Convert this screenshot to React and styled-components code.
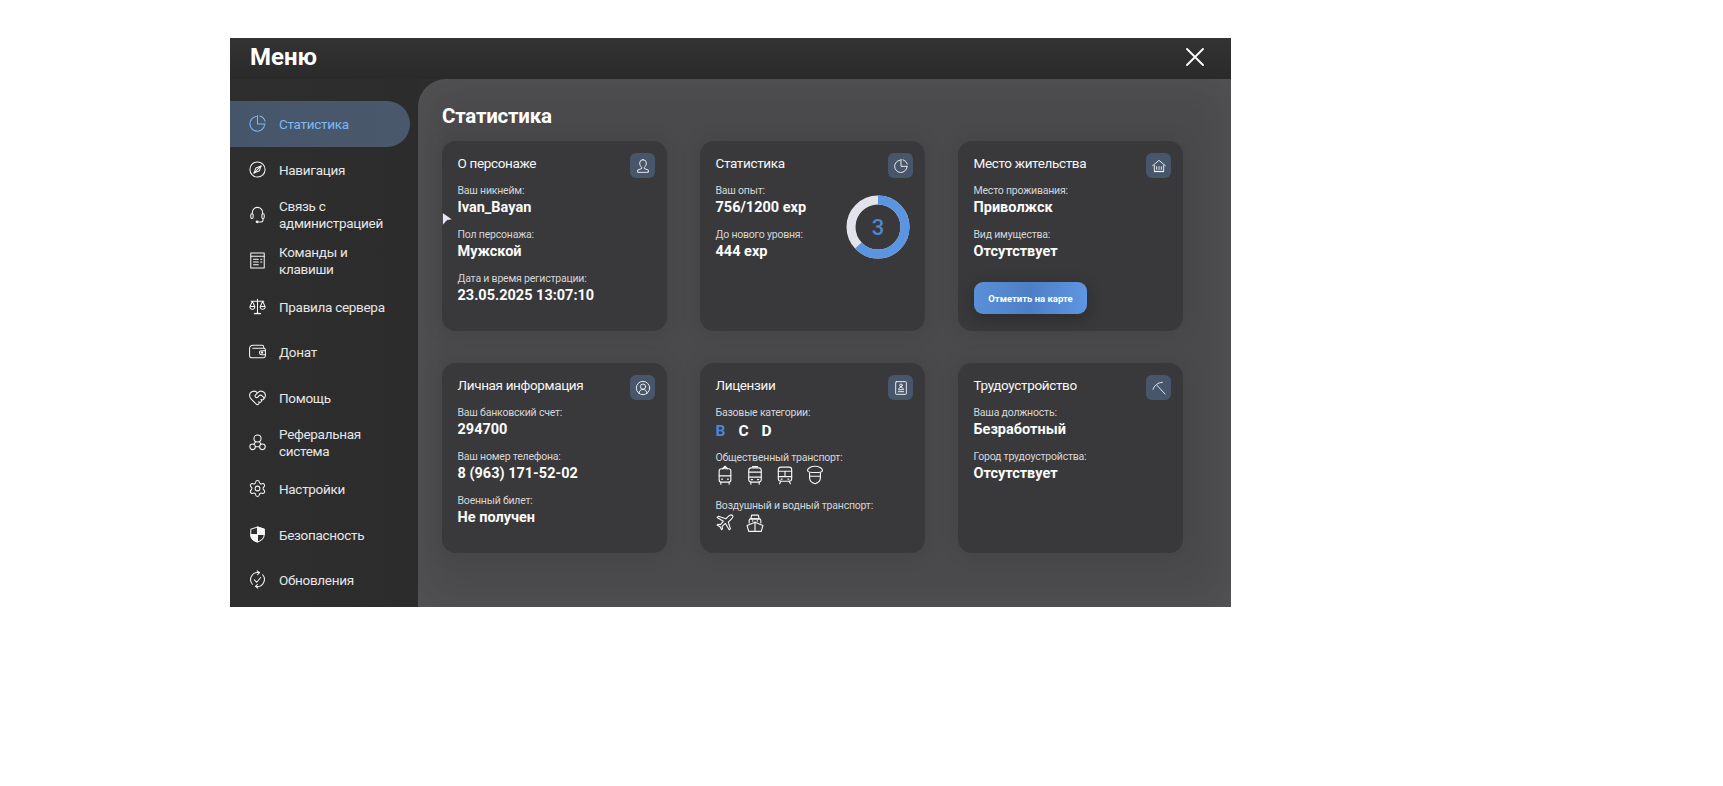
import React from 'react';
import styled, { createGlobalStyle } from 'styled-components';
import { HeartHandshake, Settings, CircleUserRound } from 'lucide-react';

const Global = createGlobalStyle`
  body {
    margin: 0;
    background: #fff;
    font-family: Roboto, "Noto Sans", sans-serif;
  }
`;

const Ico = ({ size = 18, children, strokeWidth = 1.35 }) => (
  <svg width={size} height={size} viewBox="0 0 24 24" fill="none" stroke="currentColor" strokeWidth={strokeWidth} strokeLinecap="round" strokeLinejoin="round">
    {children}
  </svg>
);

const PieClock = (p) => (
  <Ico {...p}>
    <path d="M10.500 3.200A9.300 9.300 0 1 0 21 13.500" />
    <path d="M12 2v10.500h9.600" />
    <path d="M15 2.600a9.600 9.600 0 0 1 6.500 6.500" />
  </Ico>
);
const CompassIcon = (p) => (
  <Ico {...p}>
    <circle cx="12" cy="12" r="9.600" />
    <path d="M16.500 7.500l-2 6-7 3 2.500-6.500z" />
    <path d="M16.500 7.500L7.500 16.500" />
  </Ico>
);
const Headset = (p) => (
  <Ico {...p}>
    <path d="M5.500 11V9.500a6.500 6.500 0 0 1 13 0V11" />
    <rect x="3.500" y="11" width="3" height="6" rx="1.500" />
    <rect x="17.500" y="11" width="3" height="6" rx="1.500" />
    <path d="M19 17v1.500a3 3 0 0 1-3 3h-3" />
    <circle cx="11.500" cy="21.300" r="1.200" fill="currentColor" />
  </Ico>
);
const Commands = (p) => (
  <Ico {...p}>
    <rect x="3.500" y="2.500" width="17" height="19" />
    <path d="M3.500 6.500h17M7 10.500h6M7 14h6M7 17.500h6M16 10.500h1.500M16 14h1.500" />
  </Ico>
);
const ScaleIcon = (p) => (
  <Ico {...p}>
    <path d="M12 3v17M8 21h8M10 20.500h4M4 5.500h16" />
    <path d="M5.500 5.500L2.500 12v1.500a3 3 0 0 0 3 2 3 3 0 0 0 3-2V12zM2.500 12h6" />
    <path d="M18.500 5.500L15.500 12v1.500a3 3 0 0 0 3 2 3 3 0 0 0 3-2V12zM15.500 12h6" />
  </Ico>
);
const WalletIcon = (p) => (
  <Ico {...p}>
    <path d="M20 8V6.500A2.500 2.500 0 0 0 17.500 4H6A4 4 0 0 0 2 8v9a3 3 0 0 0 3 3h14.500a2.500 2.500 0 0 0 2.500-2.500V10a2 2 0 0 0-2-2H6" />
    <path d="M22 11h-5a1.500 1.500 0 0 0 0 5h5" />
    <rect x="17" y="12.500" width="1.500" height="1.500" fill="currentColor" />
  </Ico>
);
const Referral = (p) => (
  <Ico {...p}>
    <circle cx="12" cy="7" r="4.500" />
    <circle cx="5.800" cy="17.500" r="3.500" />
    <circle cx="18.200" cy="17.500" r="3.500" />
    <path d="M9.500 11l-2 3.500M14.500 11l2 3.500M9.300 17.500h5.400" />
  </Ico>
);
const ShieldHalf = (p) => (
  <Ico {...p}>
    <path d="M12 2.500l8.500 3V12c0 5-4 8-8.500 9.500C7.500 20 3.500 17 3.500 12V5.500z" />
    <path d="M12 2.500l8.500 3V12H12zM12 12v9.500C7.500 20 3.500 17 3.500 12z" fill="currentColor" />
  </Ico>
);
const UpdateIcon = (p) => (
  <Ico {...p}>
    <path d="M5.500 18A9 9 0 0 1 14 3.300" />
    <path d="M18.500 6A9 9 0 0 1 10 20.700" />
    <path d="M11.500 1l3 2.400-2.500 2.600M12.500 23l-3-2.400 2.500-2.600" />
    <path d="M8 12.500l3 3 5-6" />
  </Ico>
);
const Bust = (p) => (
  <Ico {...p}>
    <path d="M12 2.500A5 5 0 0 0 7 7.500c0 3 1.500 5 3 6.500v2L4 18v3.500h16V18l-6-2v-2c1.500-1.500 3-3.500 3-6.500a5 5 0 0 0-5-5z" />
  </Ico>
);
const HouseIcon = (p) => (
  <Ico {...p}>
    <path d="M2.500 11.500L12 3.500l9.500 8" />
    <path d="M5 11v9h14v-9" />
    <path d="M8.500 13v4M12 13v4M15.500 13v4M5 20.500h14" />
  </Ico>
);
const LicenseIcon = (p) => (
  <Ico {...p}>
    <rect x="4" y="2.500" width="16" height="19" rx="1" />
    <circle cx="12" cy="8" r="2" />
    <path d="M8.500 14c0-2 1.500-3 3.500-3s3.500 1 3.500 3zM8 17.500h8" />
  </Ico>
);
const PickIcon = (p) => (
  <Ico {...p}>
    <path d="M3 14C5 8 10 4 17 3.500" />
    <path d="M9 8l12 13" />
  </Ico>
);
const Trolley = (p) => (
  <Ico {...p}>
    <path d="M9 4.500L12 1.500l3 3" />
    <rect x="5" y="4.500" width="14" height="16" rx="2.500" />
    <path d="M5 13h14M7 20.500v2.500M17 20.500v2.500M8 17h1M15 17h1" />
  </Ico>
);
const BusIcon = (p) => (
  <Ico {...p}>
    <path d="M9 2h6" />
    <rect x="4.500" y="3.500" width="15" height="17" rx="3" />
    <path d="M4.500 8.500h15M4.500 14.500h15M7 20.500v2.500M17 20.500v2.500M7.500 17.500h1.500M15 17.500h1.500" />
  </Ico>
);
const TrainIcon = (p) => (
  <Ico {...p}>
    <rect x="4" y="2.500" width="16" height="17" rx="3" />
    <path d="M4 7.500h16M4 14h16M12 7.500V14M7.500 17h1M15.500 17h1M7 19.500L5.500 22.500M17 19.500l1.500 3" />
  </Ico>
);
const Officer = (p) => (
  <Ico {...p}>
    <path d="M3 6.500C3 3.500 7.500 1.500 12 1.500s9 2 9 5c0 1.500-4.500 2.500-9 2.500S3 8 3 6.500z" />
    <path d="M5.500 9v6.500c0 3.500 3.500 6 6.500 7 3-1 6.500-3.500 6.500-7V9" />
    <path d="M5.500 13.500h13" />
  </Ico>
);
const PlaneIcon = (p) => (
  <Ico {...p}>
    <path d="M21 3c-1.500-1.500-3.500-.500-5 1l-3 3L4 4 2.500 5.500 10 10l-3.500 4-3-.500-1 1 3.500 2 2 3.500 1-1-.500-3 4-3.500 4.500 7.500L18.500 19 16 11l3-3c1.500-1.500 3.500-3.500 2-5z" />
  </Ico>
);
const ShipIcon = (p) => (
  <Ico {...p}>
    <path d="M8 2.500h8l1 4.500H7z" />
    <path d="M5 12V9a2 2 0 0 1 2-2h10a2 2 0 0 1 2 2v3" />
    <path d="M2.500 15L12 11l9.500 4-2 7h-15z" />
    <path d="M12 11v11M9 9.500h.500M14.500 9.500h.500" />
  </Ico>
);

const Window = styled.div`
  position: relative;
  width: 1001px;
  height: 569px;
  margin: 38px 0 0 230px;
  background: #2d2d2e;
  overflow: hidden;
  color: #fff;
`;

const Header = styled.header`
  height: 41px;
  display: flex;
  align-items: flex-start;
  justify-content: space-between;
  padding: 0 27px 0 20px;
  background: linear-gradient(180deg, #333334 0%, #2a2a2b 100%);
`;

const Logo = styled.h1`
  margin: 2px 0 0;
  font-size: 24px;
  line-height: 34px;
  font-weight: 700;
`;

const CloseButton = styled.button`
  margin-top: 10px;
  width: 18px;
  height: 18px;
  padding: 0;
  border: 0;
  background: none;
  color: #fff;
  display: block;
`;

const Body = styled.div`
  display: flex;
  height: 528px;
`;

const Sidebar = styled.nav`
  width: 188px;
  flex: none;
  padding-top: 22px;
  background: linear-gradient(90deg, #2e2e2f, #2c2c2d);
`;

const NavItem = styled.a`
  width: 180px;
  height: 45.600px;
  display: flex;
  align-items: center;
  gap: 12px;
  padding-left: 18px;
  box-sizing: border-box;
  border-radius: 0 23px 23px 0;
  font-size: 13.500px;
  line-height: 17px;
  letter-spacing: -0.3px;
  color: ${(p) => (p.$active ? '#7db9f2' : '#e6e6e6')};
  background: ${(p) => (p.$active ? 'linear-gradient(90deg, #46566a, #4a586b)' : 'none')};
`;

const NavIcon = styled.span`
  width: 19px;
  height: 19px;
  flex: none;
  display: flex;
  color: ${(p) => (p.$active ? '#7db9f2' : '#f6f6f6')};
`;

const NavText = styled.span`
  position: relative;
  top: ${(p) => (p.$wrapped ? '0' : '1px')};
  max-width: 108px;
  white-space: ${(p) => (p.$wrapped ? 'normal' : 'nowrap')};
`;

const Content = styled.main`
  flex: 1;
  padding: 24px 0 0 24px;
  border-radius: 28px 0 0 0;
  background: #4a4a4c;
  box-shadow: inset 0 0 45px rgba(255, 255, 255, 0.06);
`;

const Heading = styled.h2`
  margin: 0 0 12px;
  font-size: 20.500px;
  line-height: 26px;
  font-weight: 700;
  letter-spacing: -0.2px;
`;

const Grid = styled.div`
  display: grid;
  grid-template-columns: repeat(3, 225px);
  grid-auto-rows: 190px;
  gap: 32px 33px;
`;

const CardBox = styled.section`
  display: flex;
  flex-direction: column;
  box-sizing: border-box;
  padding: 12px 12px 17px 15.500px;
  border-radius: 14px;
  background: #39393b;
  box-shadow: 0 0 22px rgba(0, 0, 0, 0.1);
`;

const CardHead = styled.div`
  display: flex;
  justify-content: space-between;
  align-items: flex-start;
  height: 25px;
  margin-bottom: 6px;
`;

const CardTitle = styled.h3`
  margin: 0;
  font-size: 13.500px;
  line-height: 20px;
  font-weight: 400;
  letter-spacing: -0.35px;
  color: #f6f6f6;
`;

const IconBox = styled.span`
  width: 25px;
  height: 25px;
  border-radius: 6px;
  background: #47566a;
  display: flex;
  align-items: center;
  justify-content: center;
  color: #fff;
`;

const Fields = styled.div`
  display: flex;
  flex-direction: column;
  gap: 10px;
`;

const Label = styled.div`
  font-size: 10.500px;
  line-height: 14px;
  letter-spacing: -0.2px;
  color: #d6d6d8;
`;

const Value = styled.div`
  font-size: 14.500px;
  line-height: 20px;
  font-weight: 700;
  color: #fbfbfb;
  white-space: nowrap;
`;

const Row = styled.div`
  display: flex;
  justify-content: space-between;
`;

const Donut = styled.div`
  position: relative;
  width: 64px;
  height: 64px;
  margin: 11px 3px 0 0;
`;

const DonutValue = styled.span`
  position: absolute;
  inset: 0;
  display: flex;
  align-items: center;
  justify-content: center;
  font-size: 22px;
  font-weight: 500;
  color: #4b87d9;
`;

const MapButton = styled.button`
  margin: auto 0 0 0.500px;
  width: 113px;
  height: 32px;
  border: 0;
  border-radius: 9px;
  padding: 0;
  font-family: inherit;
  font-size: 9.500px;
  font-weight: 700;
  color: #fff;
  background: linear-gradient(90deg, #5a90d8, #4d7fc6 50%, #5e96e2);
  box-shadow: 0 4px 16px rgba(0, 0, 0, 0.25);
`;

const Categories = styled.div`
  display: flex;
  gap: 13px;
  margin-top: 1px;
`;

const Category = styled.span`
  font-size: 15.500px;
  line-height: 20px;
  font-weight: 700;
  color: ${(p) => (p.$on ? '#4d87da' : '#fff')};
`;

const LicenseFields = styled(Fields)`
  gap: 10px;
`;

const IconRow = styled.div`
  display: flex;
  gap: 10px;
  margin: 0 0 4px -1px;
  color: #f8f8f8;
`;

const Cursor = styled.svg`
  position: absolute;
  left: 212px;
  top: 174px;
`;

const NAV = [
  [PieClock, 'Статистика', true],
  [CompassIcon, 'Навигация'],
  [Headset, 'Связь с администрацией', false, true],
  [Commands, 'Команды и клавиши', false, true],
  [ScaleIcon, 'Правила сервера'],
  [WalletIcon, 'Донат'],
  [HeartHandshake, 'Помощь'],
  [Referral, 'Реферальная система', false, true],
  [Settings, 'Настройки'],
  [ShieldHalf, 'Безопасность'],
  [UpdateIcon, 'Обновления'],
];

const Field = ({ label, value }) => (
  <div>
    <Label>{label}</Label>
    <Value>{value}</Value>
  </div>
);

const Card = ({ title, icon: Icon, children }) => (
  <CardBox>
    <CardHead>
      <CardTitle>{title}</CardTitle>
      <IconBox><Icon size={16} strokeWidth={1.3} /></IconBox>
    </CardHead>
    {children}
  </CardBox>
);

const App = () => (
  <Window>
    <Global />
    <Header>
      <Logo>Меню</Logo>
      <CloseButton aria-label="Закрыть">
        <svg width="18" height="18" viewBox="0 0 18 18" stroke="currentColor" strokeWidth="1.8" strokeLinecap="round">
          <path d="M1 1l16 16M17 1L1 17" />
        </svg>
      </CloseButton>
    </Header>
    <Body>
      <Sidebar>
        {NAV.map(([Icon, text, active, wrapped]) => (
          <NavItem key={text} $active={active}>
            <NavIcon $active={active}><Icon size={19} strokeWidth={1.3} /></NavIcon>
            <NavText $wrapped={wrapped}>{text}</NavText>
          </NavItem>
        ))}
      </Sidebar>
      <Content>
        <Heading>Статистика</Heading>
        <Grid>
          <Card title="О персонаже" icon={Bust}>
            <Fields>
              <Field label="Ваш никнейм:" value="Ivan_Bayan" />
              <Field label="Пол персонажа:" value="Мужской" />
              <Field label="Дата и время регистрации:" value="23.05.2025 13:07:10" />
            </Fields>
          </Card>
          <Card title="Статистика" icon={PieClock}>
            <Row>
              <Fields>
                <Field label="Ваш опыт:" value="756/1200 exp" />
                <Field label="До нового уровня:" value="444 exp" />
              </Fields>
              <Donut>
                <svg width="64" height="64" viewBox="0 0 64 64" fill="none" strokeWidth="9">
                  <circle cx="32" cy="32" r="27" stroke="#e3e3ec" />
                  <circle cx="32" cy="32" r="27" stroke="#5b94e0" pathLength="1200" strokeDasharray="756 1200" transform="rotate(-90 32 32)" />
                </svg>
                <DonutValue>3</DonutValue>
              </Donut>
            </Row>
          </Card>
          <Card title="Место жительства" icon={HouseIcon}>
            <Fields>
              <Field label="Место проживания:" value="Приволжск" />
              <Field label="Вид имущества:" value="Отсутствует" />
            </Fields>
            <MapButton>Отметить на карте</MapButton>
          </Card>
          <Card title="Личная информация" icon={CircleUserRound}>
            <Fields>
              <Field label="Ваш банковский счет:" value="294700" />
              <Field label="Ваш номер телефона:" value="8 (963) 171-52-02" />
              <Field label="Военный билет:" value="Не получен" />
            </Fields>
          </Card>
          <Card title="Лицензии" icon={LicenseIcon}>
            <LicenseFields>
              <div>
                <Label>Базовые категории:</Label>
                <Categories>
                  <Category $on>B</Category>
                  <Category>C</Category>
                  <Category>D</Category>
                </Categories>
              </div>
              <div>
                <Label>Общественный транспорт:</Label>
                <IconRow>
                  <Trolley size={20} />
                  <BusIcon size={20} />
                  <TrainIcon size={20} />
                  <Officer size={20} />
                </IconRow>
              </div>
              <div>
                <Label>Воздушный и водный транспорт:</Label>
                <IconRow>
                  <PlaneIcon size={20} />
                  <ShipIcon size={20} />
                </IconRow>
              </div>
            </LicenseFields>
          </Card>
          <Card title="Трудоустройство" icon={PickIcon}>
            <Fields>
              <Field label="Ваша должность:" value="Безработный" />
              <Field label="Город трудоустройства:" value="Отсутствует" />
            </Fields>
          </Card>
        </Grid>
      </Content>
    </Body>
    <Cursor width="11" height="14" viewBox="0 0 11 14">
      <path d="M0.500 0.500L10.500 7.500L5 8.500L0.500 13.500z" fill="#e8e6f6" stroke="#222" strokeWidth="0.6" />
    </Cursor>
  </Window>
);

export default App;
